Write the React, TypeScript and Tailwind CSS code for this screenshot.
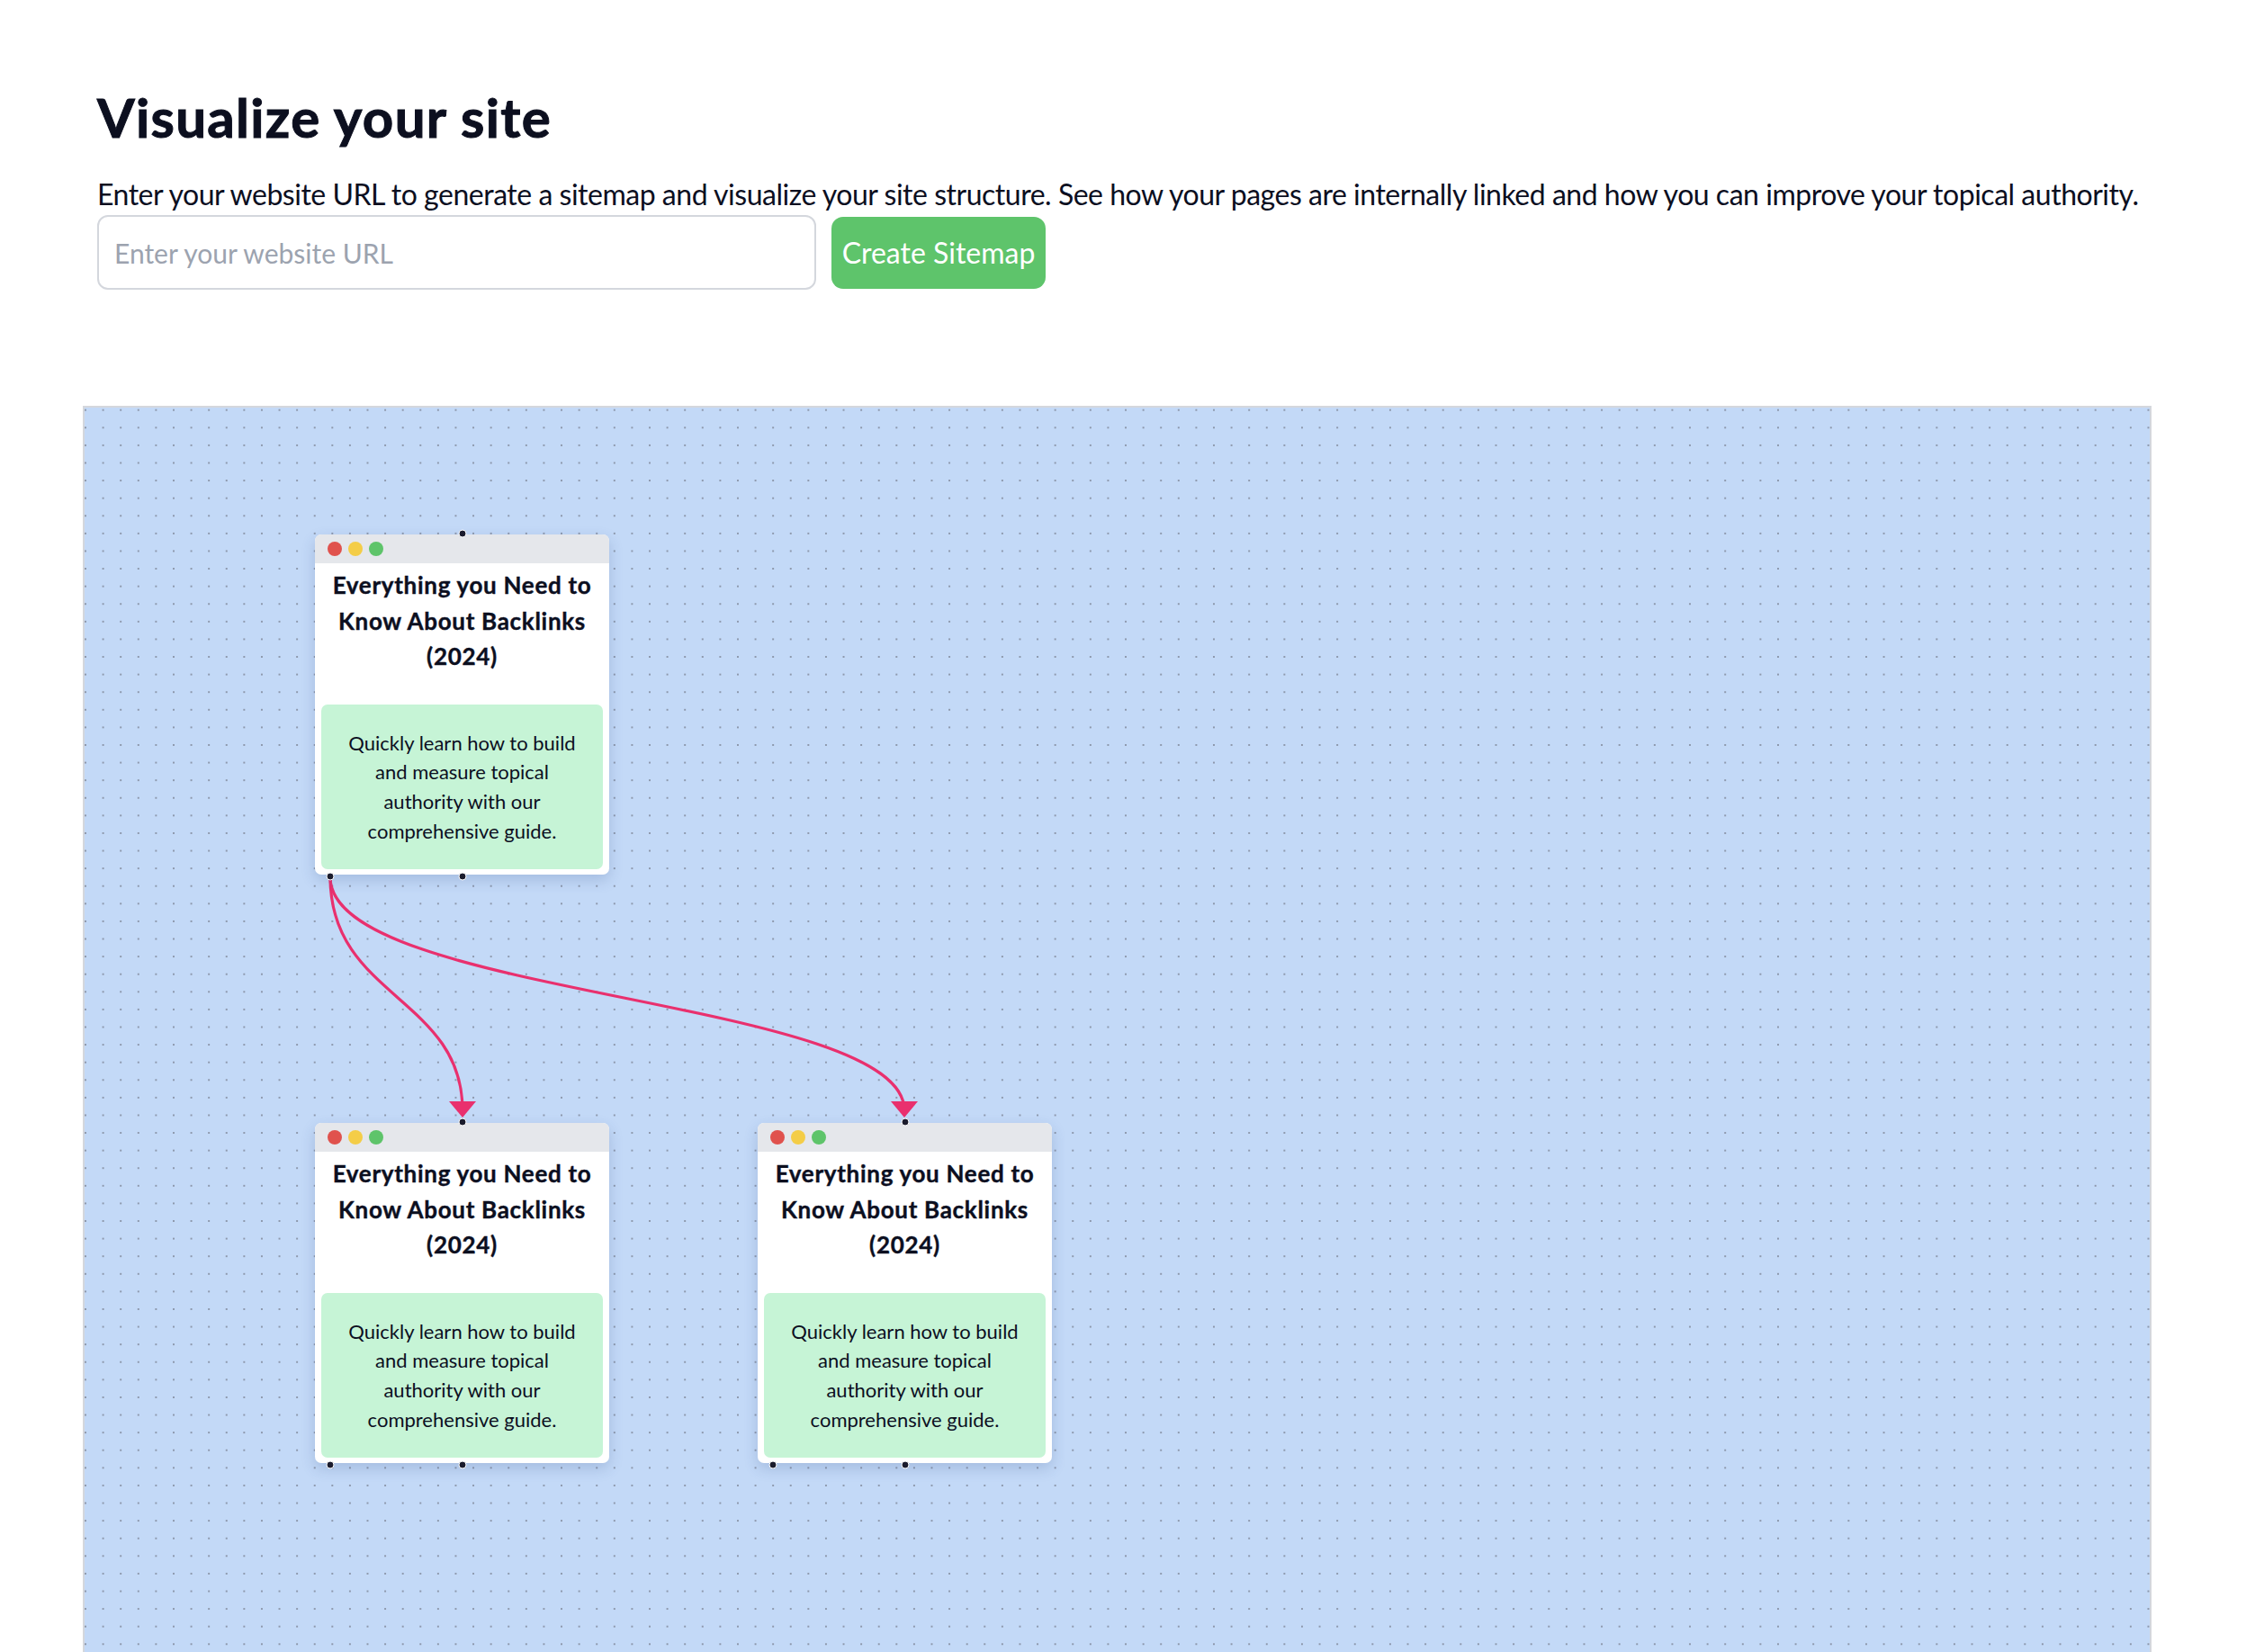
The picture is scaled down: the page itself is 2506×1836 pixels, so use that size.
import React from "react";

const nodes = [
  { id: "root", x: 256, y: 141 },
  { id: "child-a", x: 256, y: 795 },
  { id: "child-b", x: 748, y: 795 },
];

// source handle is the bottom-left one on the root card
const edges = [
  { sx: 273, sy: 522, tx: 420, ty: 789 },
  { sx: 273, sy: 522, tx: 911, ty: 789 },
];

function Handle({ className }: { className: string }) {
  return (
    <span
      className={`absolute h-[9px] w-[9px] -translate-x-1/2 -translate-y-1/2 rounded-full border-[1.5px] border-white bg-[#1b1c2d] ${className}`}
    />
  );
}

function PageNode({ x, y }: { x: number; y: number }) {
  return (
    <div className="absolute h-[378px] w-[327px]" style={{ left: x, top: y }}>
      <div className="flex h-full flex-col rounded-[7px] bg-white shadow-[0_6px_16px_rgba(40,70,130,0.2)]">
        <div className="flex h-[32px] items-center gap-[7px] rounded-t-[7px] bg-[#e5e7eb] pl-[14px]">
          <span className="h-[16px] w-[16px] rounded-full bg-[#e0524d]" />
          <span className="h-[16px] w-[16px] rounded-full bg-[#f4cd47]" />
          <span className="h-[16px] w-[16px] rounded-full bg-[#5ec46a]" />
        </div>
        <h3 className="pt-[5px] text-center text-[26px] font-bold leading-[39.5px] tracking-[0.7px] text-[#0c0f1f] [-webkit-text-stroke:0.4px_#0c0f1f]">
          Everything you Need to
          <br />
          Know About Backlinks
          <br />
          (2024)
        </h3>
        <div className="mx-[7px] mb-[6px] mt-auto flex h-[183px] items-center justify-center rounded-[7px] bg-[#c6f4d6] text-center text-[22px] leading-[32.6px] text-[#0c0f1f]">
          <p>
            Quickly learn how to build
            <br />
            and measure topical
            <br />
            authority with our
            <br />
            comprehensive guide.
          </p>
        </div>
      </div>
      <Handle className="left-[163.5px] top-[-1px]" />
      <Handle className="left-[17px] top-[380px]" />
      <Handle className="left-[163.5px] top-[380px]" />
    </div>
  );
}

export default function App() {
  return (
    <div className="min-h-screen bg-white pt-[94px] font-['Lato',sans-serif] text-[#0c0f1f]">
      <div className="pl-[108px]">
        <h1 className="text-[60px] font-bold leading-[72px] tracking-[1.3px] [-webkit-text-stroke:1px_#0c0f1f]">
          Visualize your site
        </h1>
        <p className="mt-[31px] text-[32px] leading-[38.4px] tracking-[-0.48px]">
          Enter your website URL to generate a sitemap and visualize your site structure. See how your pages are
          internally linked and how you can improve your topical authority.
        </p>
        <div className="mt-[4px] flex items-center gap-[17px]">
          <input
            type="text"
            placeholder="Enter your website URL"
            className="h-[83px] w-[799px] rounded-[12px] border-2 border-[#d4d7dd] px-[17px] text-[30px] outline-none placeholder:text-[#9ca3af]"
          />
          <button className="h-[80px] w-[238px] rounded-[13px] bg-[#5ec46b] text-[32px] text-white">
            Create Sitemap
          </button>
        </div>
      </div>

      {/* Canvas */}
      <div className="relative ml-[92px] mt-[129px] h-[1420px] w-[2299px] overflow-hidden border-2 border-[#d4d7dd] bg-[#c3d9f7] bg-[radial-gradient(circle,#8d98ac_1px,transparent_1.4px)] bg-size-[19.6px_19.6px] bg-position-[-8.8px_-7.1px]">
        <svg className="pointer-events-none absolute inset-0 h-full w-full">
          {edges.map((e, i) => {
            const c = (e.ty - e.sy) / 2;
            return (
              <g key={i}>
                <path
                  d={`M${e.sx},${e.sy} C${e.sx},${e.sy + c} ${e.tx},${e.ty - c} ${e.tx},${e.ty - 8}`}
                  fill="none"
                  stroke="#e9306e"
                  strokeWidth={3.2}
                />
                <polygon
                  points={`${e.tx - 15},${e.ty - 18} ${e.tx + 15},${e.ty - 18} ${e.tx},${e.ty}`}
                  fill="#e9306e"
                />
              </g>
            );
          })}
        </svg>
        {nodes.map((n) => (
          <PageNode key={n.id} x={n.x} y={n.y} />
        ))}
      </div>
    </div>
  );
}
